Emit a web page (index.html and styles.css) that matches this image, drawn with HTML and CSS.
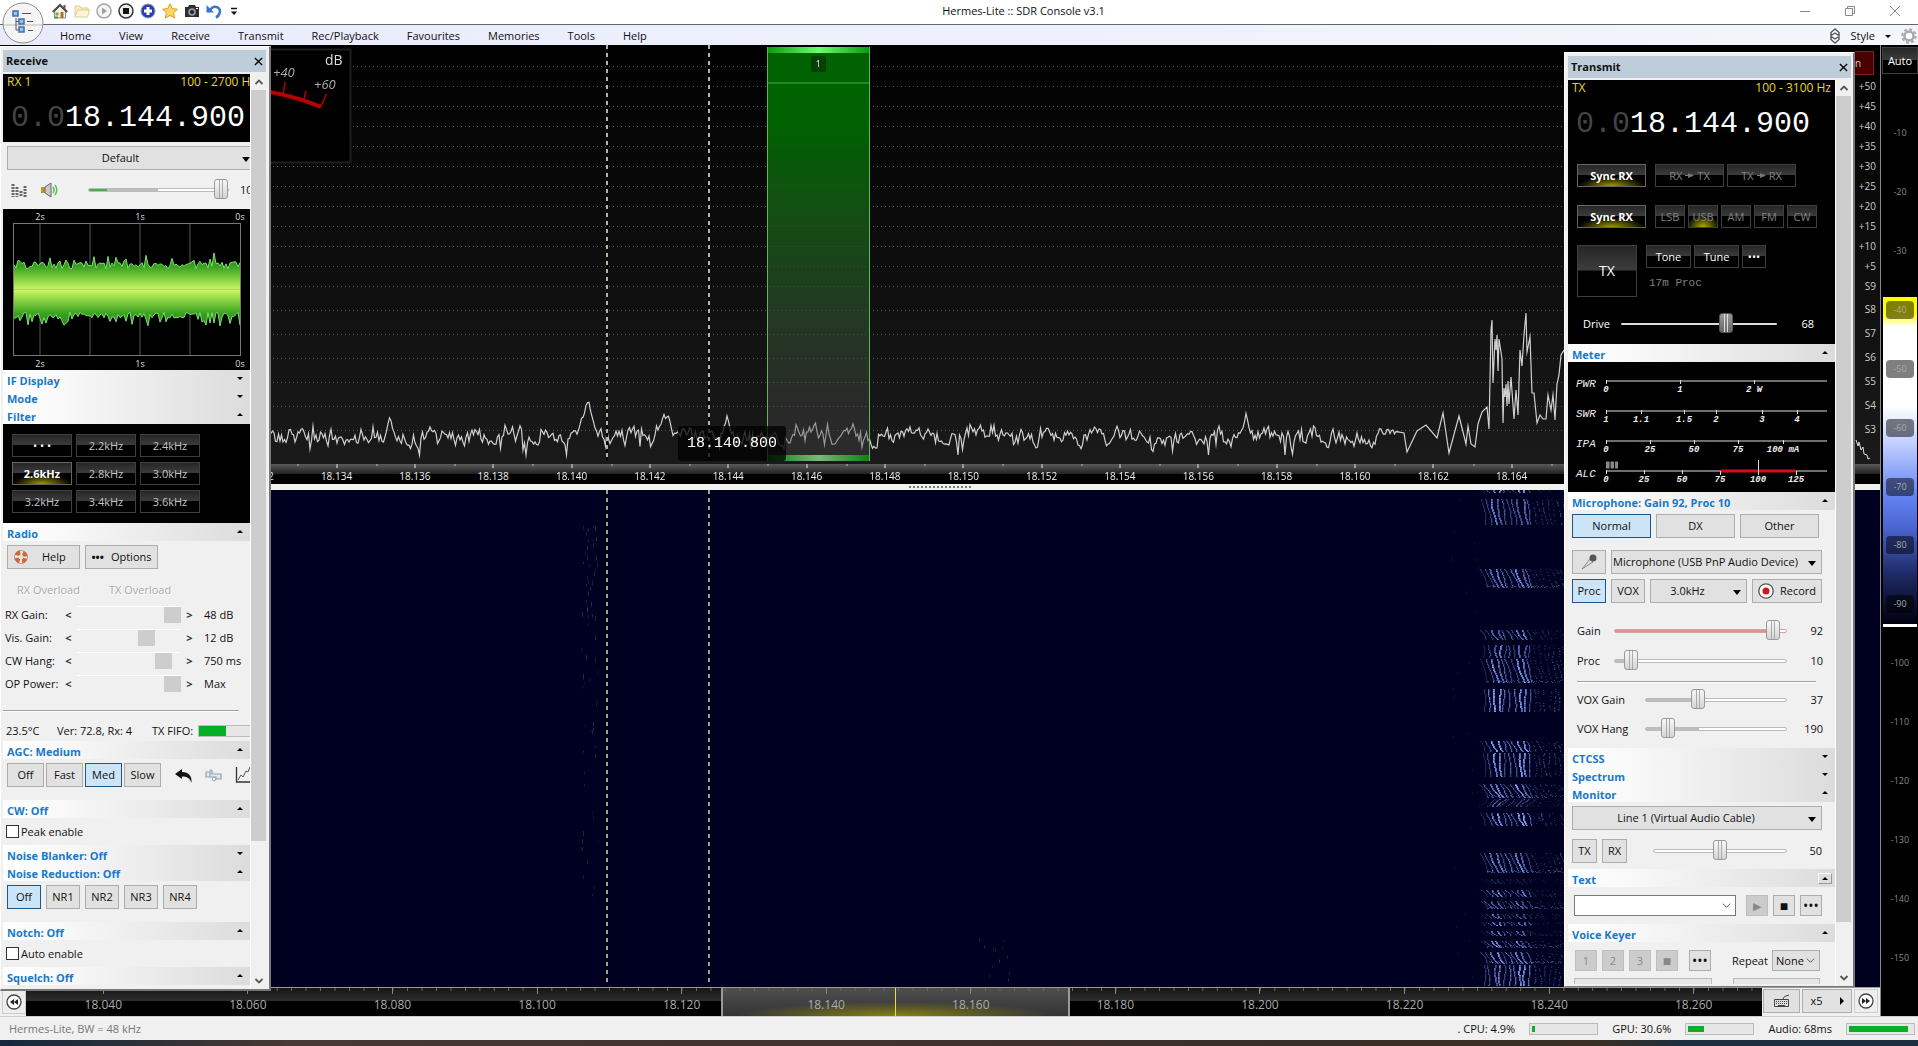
FILE: index.html
```html
<!DOCTYPE html>
<html lang="en">
<head>
<meta charset="utf-8">
<title>Hermes-Lite :: SDR Console v3.1</title>
<link rel="stylesheet" href="styles.css">
</head>
<body>
<div class="app">
  <header class="titlebar">
    <div class="quick">
      <button class="ico" aria-label="Home"><svg viewBox="0 0 16 16"><path d="M2.500 8v7h11V8L8 3z" fill="#f3efe4" stroke="#777" stroke-width=".8"/><path d="M.8 9L8 2l7.200 7" fill="none" stroke="#4c4c4c" stroke-width="2"/><path d="M11.500 2h2v4l-2-2z" fill="#a33"/><path d="M3.500 9.500h3v3h-3z" fill="#8aa04a"/><path d="M8.500 9h3v6h-3z" fill="#b2702d"/><path d="M2 14.500h4" stroke="#5a9a35" stroke-width="2"/></svg></button>
      <button class="ico" aria-label="Open"><svg viewBox="0 0 16 16"><path d="M1 14V3h5l1 2h7v3" fill="#fbe9c2" stroke="#e5cb98"/><path d="M1 14l2.500-7H15.500l-2 7z" fill="#fff3d8" stroke="#e5cb98"/></svg></button>
      <button class="ico" aria-label="Start"><svg viewBox="0 0 16 16"><circle cx="8" cy="8" r="7" fill="#f5f5f5" stroke="#a5a5a5" stroke-width="1.500"/><path d="M6 4.500L11 8l-5 3.500z" fill="#a0a0a0"/></svg></button>
      <button class="ico" aria-label="Stop"><svg viewBox="0 0 16 16"><circle cx="8" cy="8" r="7" fill="#eee" stroke="#333" stroke-width="1.500"/><path d="M5 5h6v6H5z" fill="#111"/></svg></button>
      <button class="ico" aria-label="Add receiver"><svg viewBox="0 0 16 16"><circle cx="8" cy="8" r="7" fill="#2a3ea8" stroke="#8f97c8"/><path d="M8 4v8M4 8h8" stroke="#fff" stroke-width="3"/></svg></button>
      <button class="ico" aria-label="Favourite"><svg viewBox="0 0 16 16"><path d="M8 .8l2.200 4.800 5.200.6-3.900 3.500 1.100 5.300L8 12.400 3.400 15l1.100-5.300L.6 6.200l5.200-.6z" fill="#ffd85a" stroke="#dc9a2c"/></svg></button>
      <button class="ico" aria-label="Screenshot"><svg viewBox="0 0 16 16"><path d="M1 4h3l1-2h6l1 2h3v10H1z" fill="#2e2e2e"/><circle cx="8" cy="9" r="3.800" fill="#8f9aa0"/><circle cx="8" cy="9" r="2" fill="#223"/><path d="M12 5.500h2" stroke="#fff"/></svg></button>
      <button class="ico" aria-label="Undo"><svg viewBox="0 0 16 16"><path d="M4.500 6.500C8 1.500 16 4 13.500 10.500c-.6 1.800-2 3.200-3.500 4" fill="none" stroke="#3b76c8" stroke-width="2.600"/><path d="M.5 2v7.500H8z" fill="#3b76c8"/></svg></button>
      <button class="ico more" aria-label="Customise"><svg viewBox="0 0 16 16"><path d="M3 5.500h6" stroke="#111" stroke-width="1.500"/><path d="M2.800 8.500h6.400L6 12z" fill="#111"/></svg></button>
    </div>
    <h1>Hermes-Lite :: SDR Console v3.1</h1>
    <div class="winbtns">
      <button aria-label="Minimise"><svg viewBox="0 0 12 12"><path d="M1 6.500h10" stroke="#888"/></svg></button>
      <button aria-label="Restore"><svg viewBox="0 0 12 12"><path d="M1.500 3.500h7v7h-7zM3.500 3V1.500h7v7H9" fill="none" stroke="#888"/></svg></button>
      <button aria-label="Close"><svg viewBox="0 0 12 12"><path d="M1 1l10 10M11 1L1 11" stroke="#888"/></svg></button>
    </div>
  </header>
  <nav class="menubar">
    <a href="#">Home</a><a href="#">View</a><a href="#">Receive</a><a href="#">Transmit</a><a href="#">Rec/Playback</a><a href="#">Favourites</a><a href="#">Memories</a><a href="#">Tools</a><a href="#">Help</a>
    <div class="menuright">
      <svg class="updown" viewBox="0 0 12 18"><path d="M6 2L10 5.500v3L6 6 2 8.500v-3zM6 16l-4-3.500v-3L6 12l4-2.500v3z" fill="#fff" stroke="#555" stroke-width="1.400"/></svg>
      <button class="style">Style</button><i class="tri"></i>
      <svg class="gear" viewBox="0 0 16 16"><circle cx="8" cy="8" r="6.700" fill="none" stroke="#a8a8a8" stroke-width="2" stroke-dasharray="3 2.260"/><circle cx="8" cy="8" r="4.500" fill="#fff" stroke="#a8a8a8" stroke-width="2.500"/></svg>
    </div>
  </nav>
  <button class="orb" aria-label="Application menu"><svg viewBox="0 0 42 42"><circle cx="21" cy="21" r="20" fill="#f5f5f5" stroke="#8c8c8c"/><path d="M1.500 23h39" stroke="#bbb"/><path d="M14 16v12h3M14 19.500h3M20 11.500h9M25 19.500h6M26 28.500h5" fill="none" stroke="#555"/><path d="M11 9h5v5h-5zM17 17h5v5h-5zM17 25h5v5h-5z" fill="#9cc4ee" stroke="#3c6ea8" stroke-width="1.500"/></svg></button>

  <div class="body">
    <div class="left">
      <div class="desk">
        <aside class="win rx">
          <div class="wtitle"><h2>Receive</h2><button aria-label="Close Receive"><svg viewBox="0 0 10 10"><path d="M1 1l8 8M9 1L1 9" stroke="#000" stroke-width="1.500"/></svg></button></div>
          <div class="wbody">
            <div class="content">
              <div class="freq">
                <div class="ftop"><span>RX 1</span><span class="clip">100 - 2700 Hz</span></div>
                <div class="digits"><s>0.0</s>18.144.900</div>
              </div>
              <div class="row r-default"><label class="drop wide"><select aria-label="Profile"><option>Default</option></select></label></div>
              <div class="row volume">
                <svg class="i16" viewBox="0 0 16 14"><path d="M2 1v13M6 4v10M10 8v6M14 3v11" stroke="#666" stroke-width="3" stroke-dasharray="2 1"/></svg>
                <svg class="i16 spk" viewBox="0 0 18 16"><path d="M1 5h4v6H1z" fill="#c8912c"/><path d="M5 5l6-4v14l-6-4z" fill="#c9c9c9" stroke="#666"/><path d="M13 5q2 3 0 6M15 3q3.500 5 0 10" fill="none" stroke="#5cc05c" stroke-width="1.500"/></svg>
                <input class="rng" type="range" aria-label="Volume" value="100" style="--a:13%;--b:50%">
                <output>100</output>
              </div>
              <div class="scope">
                <div class="tl"><span>2s</span><span>1s</span><span>0s</span></div>
                <canvas id="scope"></canvas>
                <div class="tl"><span>2s</span><span>1s</span><span>0s</span></div>
              </div>
              <button class="sec">IF Display<i class="tri"></i></button>
              <button class="sec">Mode<i class="tri"></i></button>
              <button class="sec">Filter<i class="tri up"></i></button>
              <div class="filters">
                <button class="glass lit">• • •</button><button class="glass">2.2kHz</button><button class="glass">2.4kHz</button>
                <button class="glass on">2.6kHz</button><button class="glass">2.8kHz</button><button class="glass">3.0kHz</button>
                <button class="glass">3.2kHz</button><button class="glass">3.4kHz</button><button class="glass">3.6kHz</button>
              </div>
              <button class="sec">Radio<i class="tri up"></i></button>
              <div class="row r4 radio-btns">
                <button class="btn w73"><svg class="buoy" viewBox="0 0 14 14"><circle cx="7" cy="7" r="4.500" fill="none" stroke="#eee" stroke-width="4"/><circle cx="7" cy="7" r="4.500" fill="none" stroke="#d4682c" stroke-width="4" stroke-dasharray="4.500 2.570" stroke-dashoffset="-1.300"/><circle cx="7" cy="7" r="6.500" fill="none" stroke="#a65" stroke-width=".6"/></svg><span>Help</span></button>
                <button class="btn w73"><b>•••</b><span>Options</span></button>
              </div>
              <div class="overload"><span>RX Overload</span><span>TX Overload</span></div>
              <div class="bars">
                <label for="g1">RX Gain:</label><button>&lt;</button><input id="g1" type="range" value="100"><button>&gt;</button><output>48 dB</output>
                <label for="g2">Vis. Gain:</label><button>&lt;</button><input id="g2" type="range" value="70"><button>&gt;</button><output>12 dB</output>
                <label for="g3">CW Hang:</label><button>&lt;</button><input id="g3" type="range" value="90"><button>&gt;</button><output>750 ms</output>
                <label for="g4">OP Power:</label><button>&lt;</button><input id="g4" type="range" value="100"><button>&gt;</button><output>Max</output>
              </div>
              <hr>
              <div class="fifo"><span>23.5°C</span><span>Ver: 72.8, Rx: 4</span><label for="fifo">TX FIFO:</label><progress id="fifo" max="100" value="40"></progress></div>
              <button class="sec">AGC: Medium<i class="tri up"></i></button>
              <div class="row r4 agc">
                <button class="btn w37">Off</button><button class="btn w37">Fast</button><button class="btn w37 sel">Med</button><button class="btn w37">Slow</button>
                <svg class="back" viewBox="0 0 17 14"><path d="M0 5L7 0v3c7 0 10 4 9.500 11C15 9 12 7.500 7 7.500V10z" fill="#111"/></svg>
                <svg class="chain" viewBox="0 0 17 13"><path d="M1 3h4v5H1zM5 2q1-2 2 0v3h9v5h-5V8H5" fill="#dfe8f0" stroke="#8fa3b5" stroke-width="1.200"/><circle cx="9" cy="10" r="1.800" fill="#fff" stroke="#8fa3b5"/></svg>
                <svg class="plot" viewBox="0 0 15 16"><path d="M1.500 0v15H15" fill="none" stroke="#333" stroke-width="1.300"/><path d="M3 13l3-5 2 2 3-6 2 1 2-5" fill="none" stroke="#555"/></svg>
              </div>
              <button class="sec">CW: Off<i class="tri up"></i></button>
              <label class="check"><input type="checkbox">Peak enable</label>
              <button class="sec">Noise Blanker: Off<i class="tri"></i></button>
              <button class="sec">Noise Reduction: Off<i class="tri up"></i></button>
              <div class="row r4 nr"><button class="btn w34 sel">Off</button><button class="btn w34">NR1</button><button class="btn w34">NR2</button><button class="btn w34">NR3</button><button class="btn w34">NR4</button></div>
              <button class="sec">Notch: Off<i class="tri up"></i></button>
              <label class="check"><input type="checkbox">Auto enable</label>
              <button class="sec">Squelch: Off<i class="tri up"></i></button>
            </div>
            <div class="sbar"><button aria-label="Scroll up"><svg viewBox="0 0 10 10"><path d="M1.500 7L5 3.500 8.500 7" fill="none" stroke="#555" stroke-width="1.800"/></svg></button><i class="thumb"></i><button class="dn" aria-label="Scroll down"><svg viewBox="0 0 10 10"><path d="M1.500 3L5 6.500 8.500 3" fill="none" stroke="#555" stroke-width="1.800"/></svg></button></div>
          </div>
        </aside>

        <main class="display">
          <div class="spectrum">
            <canvas id="spectrum"></canvas>
            <svg class="smeter" viewBox="0 0 82 116"><path d="M-1 1.500h80.500v113H-1" fill="#000" stroke="#1e1e1e" stroke-width="2"/><text x="54" y="17" font-size="14" fill="#ddd">dB</text><text x="2" y="29" font-size="13" font-style="italic" fill="#aaa">+40</text><text x="43" y="41" font-size="13" font-style="italic" fill="#aaa">+60</text><path d="M-1 44q28 5 51 15" fill="none" stroke="#b80000" stroke-width="4"/><path d="M12 47l2-13M33 51l2-8M49.500 59l6-13" fill="none" stroke="#b80000" stroke-width="1.500"/></svg>
            <div class="passband"><span>1</span></div>
            <div class="cursor c1"></div><div class="cursor c2"></div>
            <div class="readout">18.140.800</div>
          </div>
          <div class="axis">
            <span>18.132</span><span>18.134</span><span>18.136</span><span>18.138</span><span>18.140</span><span>18.142</span><span>18.144</span><span>18.146</span><span>18.148</span><span>18.150</span><span>18.152</span><span>18.154</span><span>18.156</span><span>18.158</span><span>18.160</span><span>18.162</span><span>18.164</span><span></span>
          </div>
          <div class="splitter"><i></i></div>
          <div class="waterfall"><canvas id="waterfall"></canvas><div class="cursor c1"></div><div class="cursor c2"></div></div>
        </main>

        <aside class="win tx">
          <div class="wtitle"><h2>Transmit</h2><button aria-label="Close Transmit"><svg viewBox="0 0 10 10"><path d="M1 1l8 8M9 1L1 9" stroke="#000" stroke-width="1.500"/></svg></button></div>
          <div class="wbody">
            <div class="content">
              <div class="txbox">
                <div class="ftop"><span>TX</span><span>100 - 3100 Hz</span></div>
                <div class="digits"><s>0.0</s>18.144.900</div>
                <div class="grow sync1"><button class="glass on w69">Sync RX</button><button class="glass dim w69">RX <svg viewBox="0 0 9 5"><path d="M0 2h3V0l6 2.500L3 5V3H0z" fill="#777"/></svg> TX</button><button class="glass dim w69">TX <svg viewBox="0 0 9 5"><path d="M0 2h3V0l6 2.500L3 5V3H0z" fill="#777"/></svg> RX</button></div>
                <div class="grow sync2"><button class="glass on w69">Sync RX</button><button class="glass dim w30">LSB</button><button class="glass dim w30 glow">USB</button><button class="glass dim w30">AM</button><button class="glass dim w30">FM</button><button class="glass dim w30">CW</button></div>
                <div class="ptt"><button class="glass big">TX</button><div><div class="grow"><button class="glass lit w45">Tone</button><button class="glass lit w45">Tune</button><button class="glass lit w24">•••</button></div><p>17m Proc</p></div></div>
                <div class="drive"><label for="drive">Drive</label><input id="drive" class="rng dark" type="range" value="69"><output>68</output></div>
              </div>
              <button class="sec">Meter<i class="tri up"></i></button>
              <svg class="meters" viewBox="0 0 267 130">
                <g class="mname"><text x="8" y="25">PWR</text><text x="8" y="55">SWR</text><text x="8" y="85">IPA</text><text x="8" y="115">ALC</text></g>
                <path d="M38 19h221M38 49h221M38 79h221M38 109h221" stroke="#6e6e6e" stroke-width="2"/>
                <path d="M38.500 18v4M112.500 18v4M186.500 18v4M38.500 48v4M73.500 48v4M116.500 48v4M148.500 48v4M194.500 48v4M229.500 48v4M38.500 78v4M82.500 78v4M126.500 78v4M170.500 78v4M215.500 78v4M38.500 108v4M76.500 108v4M114.500 108v4" stroke="#ddd"/>
                <path d="M152 109h76" stroke="#d01010" stroke-width="3"/><path d="M152.500 109v4M228.500 109v4M190.500 98v15" stroke="#ddd"/>
                <path d="M38 103h3.500M42.500 103h3.500M47 103h3" stroke="#888" stroke-width="7"/>
                <g class="mtick"><text x="38" y="30">0</text><text x="112" y="30">1</text><text x="186" y="30">2 W</text>
                <text x="38" y="60">1</text><text x="73" y="60">1.1</text><text x="116" y="60">1.5</text><text x="148" y="60">2</text><text x="194" y="60">3</text><text x="229" y="60">4</text>
                <text x="38" y="90">0</text><text x="82" y="90">25</text><text x="126" y="90">50</text><text x="170" y="90">75</text><text x="215" y="90">100 mA</text>
                <text x="38" y="120">0</text><text x="76" y="120">25</text><text x="114" y="120">50</text><text x="152" y="120">75</text><text x="190" y="120">100</text><text x="228" y="120">125</text></g>
              </svg>
              <button class="sec">Microphone: Gain 92, Proc 10<i class="tri up"></i></button>
              <div class="row m4 gap5"><button class="btn w79 sel">Normal</button><button class="btn w79">DX</button><button class="btn w79">Other</button></div>
              <div class="row m12 gap5"><button class="btn w34" aria-label="Microphone"><svg class="mic" viewBox="0 0 16 16"><path d="M1 15L9 5l3 3z" fill="#ddd" stroke="#777" stroke-width=".8"/><circle cx="12" cy="4" r="3.500" fill="#555"/></svg></button><label class="drop"><select aria-label="Device"><option>Microphone (USB PnP Audio Device)</option></select></label></div>
              <div class="row m5 gap5"><button class="btn w34 sel">Proc</button><button class="btn w34">VOX</button><label class="drop w97"><select aria-label="Bandwidth"><option>3.0kHz</option></select></label><button class="btn rec"><svg viewBox="0 0 16 16"><circle cx="8" cy="8" r="7.200" fill="#fff" stroke="#555" stroke-width="1.300"/><circle cx="8" cy="8" r="3.500" fill="#d01818"/></svg>Record</button></div>
              <div class="slide first"><label for="s1">Gain</label><input id="s1" class="rng red" type="range" value="96" style="--a:92%"><output>92</output></div>
              <div class="slide"><label for="s2">Proc</label><input id="s2" class="rng" type="range" value="6" style="--b:10%"><output>10</output></div>
              <hr class="in">
              <div class="slide vox"><label for="s3">VOX Gain</label><input id="s3" class="rng" type="range" value="36" style="--b:37%"><output>37</output></div>
              <div class="slide vox"><label for="s4">VOX Hang</label><input id="s4" class="rng" type="range" value="12" style="--b:38%"><output>190</output></div>
              <button class="sec ctcss">CTCSS<i class="tri"></i></button>
              <button class="sec">Spectrum<i class="tri"></i></button>
              <button class="sec">Monitor<i class="tri up"></i></button>
              <div class="row m4"><label class="drop"><select aria-label="Output"><option>Line 1 (Virtual Audio Cable)</option></select></label></div>
              <div class="row m9 gap5 mon"><button class="btn w25">TX</button><button class="btn w25">RX</button><input class="rng" aria-label="Monitor level" type="range" value="50"><output>50</output></div>
              <button class="sec">Text<i class="boxed"><i class="tri up"></i></i></button>
              <div class="row textrow"><div class="combo"><input type="text" aria-label="Text"><svg viewBox="0 0 10 10"><path d="M1 3l4 4 4-4" fill="none" stroke="#444"/></svg></div><button class="btn w22 off">▶</button><button class="btn w22 big-ch">■</button><button class="btn w22 big-ch">•••</button></div>
              <button class="sec">Voice Keyer<i class="tri up"></i></button>
              <div class="row keyer"><button class="btn w22 off">1</button><button class="btn w22 off">2</button><button class="btn w22 off">3</button><button class="btn w22 off big-ch">■</button><button class="btn w22 dots big-ch">•••</button><label for="rep">Repeat</label><div class="combo none"><select id="rep"><option>None</option></select><svg viewBox="0 0 10 10"><path d="M1 3l4 4 4-4" fill="none" stroke="#444"/></svg></div></div>
              <div class="cut"><i></i><i></i></div>
            </div>
            <div class="sbar"><button aria-label="Scroll up"><svg viewBox="0 0 10 10"><path d="M1.500 7L5 3.500 8.500 7" fill="none" stroke="#555" stroke-width="1.800"/></svg></button><i class="thumb"></i><button class="dn" aria-label="Scroll down"><svg viewBox="0 0 10 10"><path d="M1.500 3L5 6.500 8.500 3" fill="none" stroke="#555" stroke-width="1.800"/></svg></button></div>
          </div>
        </aside>

        <div class="sscale">
          <div class="sl"><b>n</b><span>+50</span><span>+45</span><span>+40</span><span>+35</span><span>+30</span><span>+25</span><span>+20</span><span>+15</span><span>+10</span><span>+5</span><span>S9</span><span class="t">S8</span><span class="t">S7</span><span class="t">S6</span><span class="t">S5</span><span class="t">S4</span><span class="t">S3</span><svg viewBox="0 0 25 22"><path d="M1 0l2 6 1-4 2 8 2-3 1 7 3 1 1 4 2-1" fill="none" stroke="#ddd"/></svg></div>
          <div class="ax"></div><div class="splitter"></div><div class="wf"></div>
        </div>
      </div>

      <div class="band">
        <button class="btn skip" aria-label="Tune down"><svg viewBox="0 0 16 16"><circle cx="8" cy="8" r="7" fill="#fff" stroke="#444" stroke-width="1.300"/><path d="M8 5v6L4 8zM12 5v6L8 8z" fill="#222"/></svg></button>
        <div class="strip">
          <div class="sel-range"></div>
          <div class="marks"><span>18.040</span><span>18.060</span><span>18.080</span><span>18.100</span><span>18.120</span><span>18.140</span><span>18.160</span><span>18.180</span><span>18.200</span><span>18.220</span><span>18.240</span><span>18.260</span></div>
        </div>
        <div class="bandbtns">
          <button class="btn kb" aria-label="Keyboard"><svg viewBox="0 0 18 14"><path d="M1.500 5.500h14v7h-14z" fill="#ddd" stroke="#444"/><path d="M3 7.500h11M3 9.500h11" stroke="#444" stroke-dasharray="1 1"/><path d="M5 11.500h7M10 5q0-3 6-4" fill="none" stroke="#444"/></svg></button>
          <button class="btn x5">x5<i></i></button>
          <button class="btn skip" aria-label="Tune up"><svg viewBox="0 0 16 16"><circle cx="8" cy="8" r="7" fill="#fff" stroke="#444" stroke-width="1.300"/><path d="M8 5v6l4-3zM4 5v6l4-3z" fill="#222"/></svg></button>
        </div>
      </div>
    </div>

    <div class="colour">
      <button class="glass lit">Auto</button>
      <div class="levels"><span>-10</span><span>-20</span><span>-30</span><span><b>-40</b></span><span><b>-50</b></span><span><b>-60</b></span><span><b>-70</b></span><span><b>-80</b></span><span><b>-90</b></span><span>-100</span><span>-110</span><span>-120</span><span>-130</span><span>-140</span><span>-150</span></div>
    </div>
  </div>

  <footer class="status">
    <span class="dev">Hermes-Lite, BW = 48 kHz</span>
    <label for="p1">. CPU: 4.9%</label><progress id="p1" max="100" value="5"></progress>
    <label for="p2">GPU: 30.6%</label><progress id="p2" max="100" value="24"></progress>
    <label for="p3">Audio: 68ms</label><progress id="p3" max="100" value="94"></progress>
  </footer>
  <div class="desktop"></div>
</div>
<script src="app.js"></script>
</body>
</html>
```
FILE: styles.css
```css
* { box-sizing: border-box; }
body { margin: 0; background: #f0f0f0; color: #111; font: 11px/14px "Open Sans", "Noto Sans", sans-serif; }
button, input, select { font: inherit; color: inherit; margin: 0; padding: 0; border: 0; background: none; border-radius: 0; }
h1, h2, p { margin: 0; font-size: 11px; }
svg, canvas { display: block; }
svg { overflow: visible; }
hr { margin: 0; border: 0; border-top: 1px solid #a0a0a0; border-bottom: 1px solid #fff; }
.app { min-height: 100vh; display: flex; flex-direction: column; position: relative; }

/* title and menu */
.titlebar { height: 25px; background: #fff; border-bottom: 1px solid #666; display: flex; align-items: center; padding-bottom: 2px; }
.quick { flex: 1; display: flex; gap: 6px; padding-left: 52px; }
.ico, .ico svg { width: 16px; height: 16px; }
.titlebar h1 { font-weight: 400; font-size: 11px; margin-left: 94px; }
.winbtns { flex: 1; display: flex; justify-content: flex-end; gap: 33px; padding-right: 17px; }
.quick, .winbtns { min-width: 0; flex-basis: 0; }
.winbtns svg { width: 12px; height: 12px; }
.menubar { height: 20px; background: linear-gradient(90deg, #e8ebfc, #f3f6fb); display: flex; align-items: center; gap: 28px; padding: 2px 0 0 60px; }
.menubar a { color: #111; text-decoration: none; }
.menuright { margin-left: auto; display: flex; align-items: center; gap: 10px; }
.updown { width: 12px; height: 18px; }
.gear { width: 16px; height: 16px; margin-right: 1px; }
.orb { position: absolute; left: 2px; top: 2px; width: 42px; height: 42px; z-index: 5; }
.tri { width: 0; height: 0; border: 3px solid transparent; border-top-color: #000; border-bottom: 0; }
.tri.up { border-top: 0; border-bottom: 3px solid #000; }

.body { flex: 1; display: flex; background: #000; }
.left { flex: 1; min-width: 0; display: flex; flex-direction: column; }
.desk { flex: 1; display: flex; background: #000; }

/* tool windows */
.win { display: flex; flex-direction: column; background: #f0f0f0; position: relative; z-index: 3; padding: 3px 3px 0; border: 1px solid #fff; border-right: 2px solid #777; }
.rx { width: 271px; margin: 1px 0 -4px; padding-left: 2px; border-bottom: 2px solid #777; }
.tx { width: 291px; margin-top: 7px; padding-right: 2px; border-bottom: 1px solid #777; }
.wtitle { height: 22px; background: #bfcddb; display: flex; align-items: center; justify-content: space-between; padding: 0 3px; margin-bottom: 2px; }
.wtitle h2 { font-weight: 700; }
.wtitle svg { width: 9px; height: 9px; }
.wbody { flex: 1; display: flex; gap: 1px; background: #fff; }
.content { flex: 1; min-width: 0; overflow: hidden; background: #f0f0f0; }
.sbar { width: 15px; background: #f0f0f0; display: flex; flex-direction: column; }
.sbar button { height: 16px; display: grid; place-items: center; }
.sbar svg { width: 10px; height: 10px; }
.sbar .thumb { flex: 1; background: #cdcdcd; }
.rx .thumb { margin-bottom: 132px; }
.tx .thumb { margin-bottom: 48px; }
.sec { display: flex; align-items: center; justify-content: space-between; width: 100%; height: 18px; padding: 3px 7px 0 4px; color: #1979ca; font-weight: 700; background: linear-gradient(90deg, #fff, #f8f8f8 25%, #dcdcdc); }
.sec .tri { margin-bottom: 5px; }
.boxed { border: 1px solid #999; border-left-color: #fff; border-top-color: #fff; padding: 2px; margin: 0 -4px 2px 0; }
.boxed .tri { display: block; margin: 1px; }

.freq { height: 68px; background: #000; margin-bottom: 4px; }
.ftop { display: flex; justify-content: space-between; color: #e8d820; font-size: 12px; line-height: 15px; padding: 0 4px; white-space: nowrap; }
.ftop .clip { margin-right: -10px; }
.digits { color: #fff; font: 30px/40px "Liberation Mono", monospace; padding: 9px 0 0 8px; white-space: nowrap; }
.digits s { color: #444; text-decoration: none; }

.row { display: flex; align-items: center; }
.btn { height: 24px; background: #e1e1e1; border: 1px solid #adadad; display: flex; align-items: center; justify-content: center; flex: none; }
.btn.sel { background: #cce4f7; border-color: #1f5688; }
.btn.off { background: #ccc; border-color: #bfbfbf; color: #888; }
.btn.big-ch { font-size: 14px; }
.w22 { width: 22px; height: 21px; } .w25 { width: 25px; } .w34 { width: 34px; } .w37 { width: 37px; } .w73 { width: 73px; } .w79 { width: 79px; } .w97 { width: 97px; }
.drop { position: relative; flex: 1; height: 24px; }
.drop.w97 { flex: none; }
.drop select { appearance: none; width: 100%; height: 24px; background: #e1e1e1; border: 1px solid #adadad; text-align: center; text-align-last: center; padding-right: 22px; }
.drop::after { content: ""; position: absolute; right: 6px; top: 11px; border: 4px solid transparent; border-top: 5px solid #000; border-bottom: 0; }
.r-default { padding-left: 4px; margin-right: -6px; }
.volume { height: 39px; padding-left: 8px; }
.i16 { width: 16px; height: 14px; }
.spk { width: 18px; height: 16px; margin-left: 13px; }
.volume .rng { width: 141px; margin: 0 11px 0 30px; flex: none; }

/* sliders */
.rng { appearance: none; height: 20px; background: transparent; --a: 0%; --b: 0%; }
.rng::-webkit-slider-runnable-track { height: 4px; border: 1px solid #bbb; border-radius: 2px; background: linear-gradient(90deg, #4caa50 var(--a), #bdbdbd var(--a) var(--b), #fff var(--b)); }
.rng.red::-webkit-slider-runnable-track { border-color: #d5a5a5; background: linear-gradient(90deg, #e88c8c var(--a), #fff var(--a)); }
.rng::-webkit-slider-thumb { appearance: none; width: 14px; height: 20px; margin-top: -10px; border: 1px solid #999; border-radius: 3px; background: linear-gradient(90deg, transparent 4px, #aaa 4px 5px, transparent 5px 7px, #aaa 7px 8px, transparent 8px), linear-gradient(#f8f8f8, #d4d4d4); }
.rng.dark::-webkit-slider-runnable-track { height: 2px; border: 0; background: #ddd; }
.rng.dark::-webkit-slider-thumb { border-color: #555; background: linear-gradient(90deg, transparent 4px, #ddd 4px 5px, transparent 5px 7px, #ddd 7px 8px, transparent 8px), linear-gradient(#999, #666); }

.scope { background: #000; height: 161px; color: #ddd; font-size: 9px; }
.tl { display: flex; height: 14px; padding-top: 1px; }
.tl span { width: 100px; text-align: center; flex: none; }
.tl span:first-child { margin-left: -13px; }
.scope canvas { width: 228px; height: 133px; margin-left: 10px; }

.glass { height: 23px; border: 1px solid #3e3e3e; background: linear-gradient(#262626, #3c3c3c 48%, #000 50%); color: #c4c4c4; display: flex; align-items: center; justify-content: center; gap: 3px; flex: none; white-space: nowrap; }
.glass.lit { color: #fff; }
.glass.dim { color: #808080; }
.glass.on { color: #fff; font-weight: 700; border-color: #666; background: radial-gradient(ellipse 50% 45% at 50% 100%, #a09a00, transparent), linear-gradient(#262626, #3c3c3c 48%, #000 50%); }
.glass.glow { background: radial-gradient(ellipse 60% 60% at 50% 100%, #b3ae00, transparent), linear-gradient(#262626, #3c3c3c 48%, #000 50%); }
.glass svg { width: 9px; height: 5px; }
.w24 { width: 24px; } .w30 { width: 30px; } .w45 { width: 45px; } .w69 { width: 69px; }
.filters { background: #000; height: 99px; padding: 10px 9px; display: grid; grid-template-columns: repeat(3, 60px); grid-auto-rows: 23px; gap: 5px 4px; }
.r4 { padding: 4px 4px 0; }
.radio-btns { gap: 5px; }
.w73 { gap: 7px; }
.w73:first-child { justify-content: flex-start; gap: 14px; padding-left: 6px; }
.buoy { width: 14px; height: 14px; }
.overload { display: flex; gap: 29px; padding: 14px 0 0 14px; height: 34px; color: #aaa; text-shadow: 1px 1px #fff; }
.bars { display: grid; grid-template-columns: 55px 17px 104px 17px 1fr; grid-auto-rows: 23px; align-items: center; height: 107px; padding-left: 2px; }
.bars button { color: #333; font-weight: 700; }
.bars input { appearance: none; width: 104px; height: 18px; background: transparent; border-top: 1px solid #fff; }
.bars input::-webkit-slider-thumb { appearance: none; width: 17px; height: 16px; background: #cdcdcd; }
.bars output { padding-left: 6px; }
.content > hr { margin-right: 11px; }
.fifo { display: flex; align-items: center; height: 29px; padding: 8px 0 0 3px; white-space: nowrap; }
.fifo span { width: 95px; flex: none; }
.fifo span:first-child { width: 51px; }
.fifo label { margin-right: 5px; }
.fifo progress { width: 70px; flex: none; }
progress { appearance: none; height: 12px; border: 1px solid #bcbcbc; background: #e6e6e6; padding: 0; }
progress::-webkit-progress-bar { background: #e6e6e6; }
progress::-webkit-progress-value { background: #06b025; }
.agc { gap: 2px; height: 41px; align-items: flex-start; }
.back { width: 17px; height: 14px; margin: 6px 0 0 12px; }
.chain { width: 17px; height: 13px; margin: 6px 0 0 11px; }
.plot { width: 15px; height: 16px; margin: 4px 0 0 11px; flex: none; }
.check { display: flex; align-items: center; height: 27px; padding-left: 3px; gap: 2px; }
.check input { appearance: none; width: 13px; height: 13px; border: 1px solid #333; background: #fff; }
.nr { gap: 5px; height: 41px; align-items: flex-start; }

/* transmit */
.txbox { background: #000; height: 264px; color: #fff; }
.txbox .digits { height: 69px; }
.grow { display: flex; gap: 3px; }
.sync1, .sync2 { margin: 0 0 18px 9px; }
.sync1 .on, .sync2 .on { margin-right: 6px; }
.ptt { display: flex; gap: 9px; margin: -1px 0 0 9px; }
.big { width: 60px; height: 52px; color: #fff; font-size: 14px; }
.ptt p { font: 11px/14px "Liberation Mono", monospace; color: #808080; margin: 8px 0 0 3px; }
.drive { display: flex; align-items: center; margin: 16px 21px 0 15px; height: 22px; }
.drive .rng { width: 156px; margin-left: 12px; }
.drive label { width: 26px; }
.drive output { margin-left: auto; }
.meters { width: 267px; height: 130px; background: #000; font: italic 11px "Liberation Mono", monospace; fill: #eee; }
.mtick { font-size: 9px; text-anchor: middle; font-weight: 700; }
.tx .row { padding: 0 13px 0 4px; }
.gap5 { gap: 5px; }
.m4 { margin-top: 4px; } .m5 { margin-top: 5px; } .m9 { margin-top: 9px; } .m12 { margin-top: 12px; }
.mic { width: 16px; height: 16px; }
.rec { width: 70px; gap: 6px; }
.rec svg { width: 16px; height: 16px; }
.slide { display: grid; grid-template-columns: 37px 173px 1fr; align-items: center; height: 30px; padding: 0 12px 0 9px; white-space: nowrap; }
.slide.first { margin-top: 13px; }
.slide.vox { grid-template-columns: 68px 142px 1fr; height: 29px; }
.slide .rng { width: 100%; }
.slide output { text-align: right; }
.content > hr.in { margin: 5px 19px 2px 9px; }
.ctcss { margin-top: 5px; }
.mon { margin-bottom: 6px; }
.mon .rng { width: 134px; margin-left: 21px; }
.mon output { margin-left: auto; }
.textrow { height: 37px; gap: 5px; }
.combo { display: flex; align-items: center; width: 162px; height: 21px; background: #fff; border: 1px solid #7a7a7a; margin: 0 5px 0 2px; padding: 0 4px; }
.combo input, .combo select { flex: 1; min-width: 0; appearance: none; outline: 0; }
.combo svg { width: 9px; height: 9px; flex: none; }
.keyer { height: 36px; gap: 5px; }
.tx .keyer { padding: 1px 12px 0 7px; }
.dots { margin-left: 6px; }
.keyer label { margin-left: 16px; width: 35px; }
.combo.none { width: 48px; background: #e1e1e1; border-color: #adadad; margin: 0; padding: 0 4px 0 3px; }
.cut { display: flex; gap: 21px; padding: 0 15px 0 6px; }
.cut i { height: 6px; width: 138px; border: 1px solid #bbb; border-bottom: 0; background: #e6e6e6; }
.cut i + i { width: 87px; }

/* displays */
.display { flex: 1; min-width: 0; display: flex; flex-direction: column; }
.spectrum { position: relative; height: 419px; background: linear-gradient(#000, #1a1a1a); overflow: hidden; }
.spectrum canvas, .waterfall canvas { position: absolute; inset: 0; width: 100%; height: 100%; }
.smeter { position: absolute; left: 0; top: 3px; width: 82px; height: 116px; }
.passband { position: absolute; left: 38.350%; top: 2px; width: 7.970%; bottom: 3px; border: 1px solid #5cb85c; border-width: 0 1px; background: linear-gradient(90deg, #0a9d0a, #6cff6c, #0a9d0a) top / 100% 6px no-repeat, linear-gradient(90deg, #128012, #7ab87a, #128012) bottom / 100% 6px no-repeat, linear-gradient(#1c8e1c, #1c8e1c) 0 35px / 100% 2px no-repeat, linear-gradient(rgba(0,104,0,.94) 18%, rgba(20,92,20,.85) 38%, rgba(50,80,50,.6) 68%, rgba(70,70,70,.4) 88%); }
.passband span { display: block; width: 15px; height: 16px; margin: 9px auto; background: #064006; color: #e8ffd0; font-size: 9px; line-height: 16px; text-align: center; border-radius: 2px; }
.cursor { position: absolute; top: 0; bottom: 3px; width: 2px; background: repeating-linear-gradient(#b4b4a8 0 4px, #000 4px 8px); }
.c1 { left: 25.900%; } .c2 { left: 33.800%; }
.waterfall .cursor { background: repeating-linear-gradient(#a0a090 0 4px, #000 4px 8px); }
.readout { position: absolute; left: 31.480%; bottom: 3px; width: 108px; height: 35px; border-radius: 3px; background: rgba(0,0,0,.75); color: #fff; font: 15px/36px "Liberation Mono", monospace; text-align: center; }
.axis { display: grid; grid-auto-flow: column; grid-auto-columns: 6.060%; height: 20px; overflow: hidden; background: linear-gradient(#5a5a5a, #202020 10px, #000 10px); }
.axis span { transform: translateX(-52px); padding-top: 5px; color: #eee; font-size: 10px; line-height: 15px; text-align: center; background: linear-gradient(#999, #999) 50% 0 / 2px 4px no-repeat, linear-gradient(#888, #888) 0 0 / 2px 2px no-repeat; }
.splitter { height: 6px; background: #f0f0f0; display: grid; place-items: center; }
.splitter i { width: 62px; height: 2px; margin-left: 44px; background: repeating-linear-gradient(90deg, #777 0 2px, transparent 2px 4px); }
.waterfall { flex: 1; position: relative; background: #000020; }
.sscale { width: 25px; display: flex; flex-direction: column; color: #ccc; font-size: 10px; }
.sl { height: 419px; background: linear-gradient(#000, #1a1a1a); padding-top: 6px; }
.sl b { display: block; width: 19px; height: 24px; margin-bottom: 1px; background: #4a0000; border: 1px solid #722; border-left: 0; font-weight: 400; line-height: 22px; color: #ccc; }
.sl span { display: block; height: 20px; line-height: 20px; text-align: right; padding-right: 4px; }
.sl .t { height: 24px; line-height: 26px; }
.sl svg { width: 25px; height: 22px; }
.ax { height: 20px; background: linear-gradient(#5a5a5a, #202020 10px, #000 10px); }
.wf { flex: 1; background: #000020; }

/* band strip */
.band { display: flex; height: 29px; border-top: 1px solid #999; background: #f0f0f0; }
.skip { width: 24px; margin: 2px 0 0 2px; border-color: #ccc; background: #eee; }
.skip svg { width: 16px; height: 16px; }
.strip { flex: 1; position: relative; overflow: hidden; background: linear-gradient(#161616, #2e2e2e 13px, #000 13px); }
.marks { position: relative; display: grid; grid-template-columns: repeat(12, 1fr); margin: 0 -4px 0 5px; height: 28px; }
.marks span { color: #aaa; font-size: 12px; line-height: 34px; text-align: center; background: linear-gradient(#888, #888) 50% 0 / 1px 6px no-repeat, linear-gradient(90deg, #666 1px, transparent 1px) 0 0 / 10% 3px repeat-x; }
.sel-range { position: absolute; left: 40.030%; width: 20.100%; top: 0; bottom: 0; border: 1px solid #999; border-width: 0 2px; background: linear-gradient(#e8e040, #e8e040) 50% 0 / 1px 100% no-repeat, radial-gradient(ellipse 46% 50% at 50% 100%, #87830f, transparent), linear-gradient(#4e4e4e, #343434); }
.bandbtns { display: flex; gap: 2px; padding: 1px 2px 0 1px; }
.bandbtns .btn { margin: 0; height: 24px; }
.kb { width: 37px; } .x5 { width: 50px; gap: 17px; }
.kb svg { width: 18px; height: 14px; }
.x5 i { border: 4px solid transparent; border-left-color: #000; border-right: 0; }

/* colour scale */
.colour { width: 38px; background: #000; border-left: 1px solid #888; display: flex; flex-direction: column; padding: 2px 0 29px 1px; }
.colour .glass { width: 36px; height: 27px; margin-bottom: 30px; }
.levels { flex: 1; display: grid; grid-auto-rows: 1fr; color: #888; font-size: 9px; background: linear-gradient(#ff0 0, #ff0 5%, #fff 9%, #fff 33%, #c4d0ff 44%, #6486f4 60%, #4a64d0 70%, #1e2a66 84%, #000010 99%, #fff 99%) 1px 193px / 34px 330px no-repeat; }
.levels span { display: grid; place-items: center; }
.levels b { width: 28px; height: 18px; border-radius: 4px; background: rgba(0,0,0,.5); color: #aaa; font-weight: 400; line-height: 18px; text-align: center; }

.status { height: 24px; display: flex; align-items: center; padding: 0 3px 0 9px; border-top: 1px solid #ccc; gap: 14px; }
.dev { margin-right: auto; color: #777; }
.status progress { width: 69px; padding: 2px; }
.desktop { height: 6px; background: linear-gradient(90deg, #14283c, #463832 15%, #3a2e28 70%, #3a2f22 83%, #1b2e40 88%); }
```
FILE: app.js
```js
// Small seeded generator, so that the displays look the same on each load.
function rng(seed) {
  return function () {
    seed = (seed * 1664525 + 1013904223) % 4294967296;
    return seed / 4294967296;
  };
}
function prepare(id) {
  const c = document.getElementById(id);
  c.width = c.clientWidth;
  c.height = c.clientHeight;
  return { g: c.getContext('2d'), w: c.width, h: c.height };
}

function drawScope() {
  const { g, w, h } = prepare('scope');
  const r = rng(7);
  [27, 77, 127, 177].forEach(x => {
    g.fillStyle = '#2a2a2a';
    g.fillRect(x - 1, 1, 2, h - 2);
  });
  const mid = 67, top = [], bot = [];
  for (let x = 1; x < w; x += 2) {
    const a = r(), b = r();
    top.push([x, mid - 21 - r() * 7 - (a > .65 ? r() * 10 : 0)]);
    bot.push([x, mid + 22 + r() * 6 + (b > .6 ? r() * 10 : 0)]);
  }
  const fill = g.createLinearGradient(0, mid - 34, 0, mid + 34);
  fill.addColorStop(0, '#2a8a1a');
  fill.addColorStop(.15, '#38a020');
  fill.addColorStop(.5, '#c8fa60');
  fill.addColorStop(.85, '#38a020');
  fill.addColorStop(1, '#2a8a1a');
  g.beginPath();
  top.forEach(p => g.lineTo(p[0], p[1]));
  bot.slice().reverse().forEach(p => g.lineTo(p[0], p[1]));
  g.fillStyle = fill;
  g.fill();
  g.strokeStyle = '#7ee070';
  [top, bot].forEach(l => { g.beginPath(); l.forEach(p => g.lineTo(p[0], p[1])); g.stroke(); });
  g.fillStyle = '#80f060';
  g.fillRect(1, mid - 1, w - 2, 1);
  g.strokeStyle = '#777';
  g.strokeRect(.5, .5, w - 1, h - 1);
}

// Strong signals at the right of the span: [x, y] in display units.
const SIGNAL = [[1133,388],[1136,407],[1146,386],[1155,380],[1166,393],[1172,368],[1178,408],[1188,371],[1195,399],[1197,381],[1200,399],[1204,402],[1207,379],[1211,367],[1216,362],[1218,384],[1220,285],[1221,275],[1222,338],[1224,294],[1225,305],[1226,290],[1227,326],[1228,294],[1231,314],[1232,378],[1233,343],[1234,352],[1235,339],[1236,361],[1237,336],[1238,359],[1240,332],[1243,374],[1245,345],[1247,370],[1249,305],[1251,321],[1253,290],[1255,268],[1256,307],[1259,292],[1261,348],[1263,348],[1266,378],[1269,370],[1272,374],[1275,374],[1277,350],[1280,365],[1282,350],[1284,375],[1286,339],[1288,330],[1290,310],[1293,305]];
const PEAKS = [[19,380],[90,384],[119,370],[174,386],[311,368],[317,352],[393,366],[397,367],[456,369],[582,376],[666,388],[737,382],[862,388],[975,367]];

function drawSpectrum() {
  const { g, w } = prepare('spectrum');
  const r = rng(42), k = w / 1293;
  g.fillStyle = '#555';
  const lines = [];
  for (let y = 21; y <= 241; y += 20) lines.push(y);
  for (let y = 265; y <= 390; y += 24) lines.push(y);
  lines.forEach(y => { for (let x = 2; x < w; x += 4) g.fillRect(x, y, 1, 1); });

  const pts = [];
  let y = 392;
  for (let x = 0; x < 1126; x += 1.5) {
    y += (392 - y) * .4 + (r() - .5) * 14;
    let v = y + (r() > .96 ? 12 : 0) - (r() > .96 ? 7 : 0);
    PEAKS.forEach(p => {
      const d = Math.abs(x - p[0]);
      if (d < 8) v = Math.min(v, p[1] + d * 4 + r() * 4);
    });
    pts.push([x, Math.min(v, 410)]);
  }
  pts.push(...SIGNAL);
  g.strokeStyle = '#d0d0d0';
  g.lineWidth = 1.2;
  g.beginPath();
  pts.forEach(p => g.lineTo(p[0] * k, p[1]));
  g.stroke();
}

// Voice bursts on the waterfall: [top, bottom, strength, slant].
const BURSTS = [[0,3,.8,2],[9,35,.8,5],[79,98,.9,8],[140,150,.8,6],[155,168,.7,0],[169,193,.8,7],[199,222,1,0],[251,262,.9,5],[263,287,.9,2],[294,308,.9,9],[309,317,.5,-9],[323,336,1,5],[363,383,.9,8],[389,394,.3,5],[400,407,.8,6],[411,419,.8,7],[424,429,.7,5],[432,436,.7,4],[441,446,.7,5],[451,458,.8,7],[462,474,.9,7],[475,496,.9,0]];

function drawWaterfall() {
  const { g, w, h } = prepare('waterfall');
  const r = rng(99), k = w / 1293;
  function dot(x, y, a, hh) {
    g.fillStyle = 'rgba(125,160,255,' + Math.min(a, 1) + ')';
    g.fillRect(Math.round(x * k), y, 1, hh || 1);
  }
  BURSTS.forEach(([t, b, s, slant]) => {
    const len = b - t;
    for (let x0 = 1212; x0 < 1296; x0 += 5) {
      const near = (x0 > 1218 && x0 < 1232) || (x0 > 1246 && x0 < 1256);
      let a = near ? 1 : x0 > 1258 ? .35 : x0 < 1216 ? .35 : .62;
      a *= s * (.7 + r() * .6);
      const off = r() * 2;
      for (let y = t; y < b; y++) {
        const f = (y - t) / len;
        if (x0 > 1258 && r() > .5) continue;
        const x = x0 + off + slant * (f - .5) + Math.sin(f * 5 + x0) * .8;
        const v = a * (.6 + r() * .5);
        dot(x, y, v);
        dot(x + 1, y, v * (near ? .8 : .35));
      }
    }
    if (slant > 6) for (let x = 1216; x < 1290; x++) if (r() > .4) dot(x, b - 1 - Math.round(r() * 2), .4);
  });
  for (let i = 0; i < 70; i++) dot(310 + r() * 17, 35 + Math.pow(r(), 1.5) * 370, .1 + r() * .15, 2 + r() * 4);
  for (let i = 0; i < 12; i++) dot(705 + r() * 40, 445 + r() * 45, .12 + r() * .15, 3);
  for (let i = 0; i < 25; i++) dot(1180 + r() * 30, r() * h, .12, 2);
}

function drawAll() { drawScope(); drawSpectrum(); drawWaterfall(); }
window.addEventListener('resize', drawAll);
drawAll();
```
